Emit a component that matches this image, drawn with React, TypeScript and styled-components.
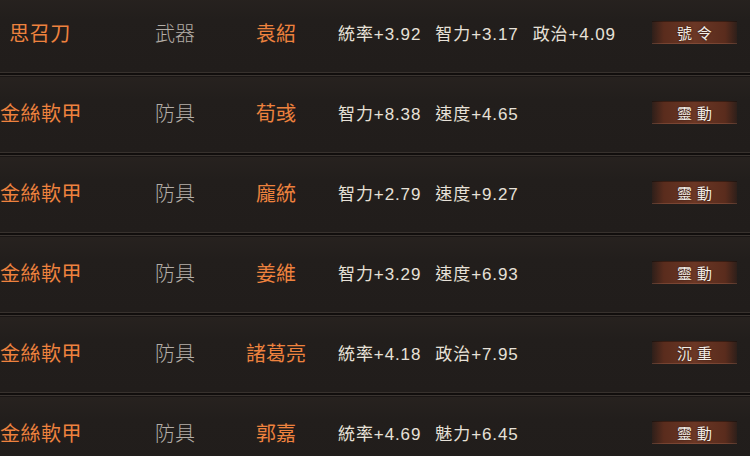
import React from "react";
import styled, { createGlobalStyle } from "styled-components";

const GlobalStyle = createGlobalStyle`
  html, body {
    margin: 0;
    padding: 0;
    width: 750px;
    height: 456px;
    overflow: hidden;
    background: #221e1c;
  }
`;

const List = styled.div`
  display: flex;
  flex-direction: column;
  margin-top: -3px;
  width: 750px;
  font-family: "Noto Sans CJK TC", "Noto Sans CJK SC", sans-serif;
`;

const Row = styled.div`
  display: flex;
  flex-direction: column;
`;

const RowBody = styled.div`
  height: 75px;
  box-sizing: border-box;
  padding: 0 13px 4px 0;
  display: flex;
  align-items: center;
  background: linear-gradient(180deg, #27221f 0%, #221e1c 30%, #211d1b 100%);
`;

const Separator = styled.div`
  height: 5px;
  box-sizing: border-box;
  border-top: 1px solid #37312d;
  border-bottom: 1px solid #1a1615;
  background: linear-gradient(180deg, #110e0d 0%, #110e0d 60%, #3a3430 60%, #3a3430 100%);
`;

const NameCell = styled.div`
  width: 80px;
  flex: none;
  text-align: center;
  font-size: 20px;
  font-weight: 400;
  letter-spacing: 0.5px;
  color: #ee823e;
  white-space: nowrap;
`;

const TypeCell = styled.div`
  width: 80px;
  flex: none;
  margin-left: 55px;
  text-align: center;
  font-size: 20px;
  font-weight: 300;
  color: #b3ada7;
  white-space: nowrap;
`;

const HeroCell = styled.div`
  width: 80px;
  flex: none;
  margin-left: 21px;
  text-align: center;
  font-size: 20px;
  font-weight: 400;
  color: #ee823e;
  white-space: nowrap;
`;

const StatsCell = styled.div`
  flex: 1;
  margin-left: 22px;
  display: flex;
  align-items: center;
  gap: 14px;
  font-family: "Liberation Sans", "Noto Sans CJK TC", sans-serif;
  font-size: 17px;
  letter-spacing: 0.9px;
  color: #e7e1d8;
  white-space: nowrap;
`;

const Stat = styled.span``;

const Tag = styled.div`
  width: 85px;
  height: 23px;
  flex: none;
  box-sizing: border-box;
  display: flex;
  align-items: center;
  justify-content: center;
  padding-left: 5px;
  font-size: 15px;
  letter-spacing: 5px;
  color: #f2ede6;
  background: linear-gradient(
    90deg,
    rgba(70, 34, 22, 0.35) 0%,
    #5a2c1d 14%,
    #6b3725 50%,
    #5a2c1d 86%,
    rgba(70, 34, 22, 0.35) 100%
  );
  box-shadow: inset 0 -1px 0 rgba(170, 110, 85, 0.35), inset 0 1px 0 rgba(0, 0, 0, 0.35);
  text-shadow: 0 0 2px rgba(0, 0, 0, 0.6);
`;

type Item = {
  name: string;
  type: string;
  hero: string;
  stats: string[];
  tag: string;
};

const items: Item[] = [
  { name: "思召刀", type: "武器", hero: "袁紹", stats: ["統率+3.92", "智力+3.17", "政治+4.09"], tag: "號令" },
  { name: "金絲軟甲", type: "防具", hero: "荀彧", stats: ["智力+8.38", "速度+4.65"], tag: "靈動" },
  { name: "金絲軟甲", type: "防具", hero: "龐統", stats: ["智力+2.79", "速度+9.27"], tag: "靈動" },
  { name: "金絲軟甲", type: "防具", hero: "姜維", stats: ["智力+3.29", "速度+6.93"], tag: "靈動" },
  { name: "金絲軟甲", type: "防具", hero: "諸葛亮", stats: ["統率+4.18", "政治+7.95"], tag: "沉重" },
  { name: "金絲軟甲", type: "防具", hero: "郭嘉", stats: ["統率+4.69", "魅力+6.45"], tag: "靈動" },
];

export default function App() {
  return (
    <>
      <GlobalStyle />
      <List>
        {items.map((it, i) => (
          <Row key={i}>
            <RowBody>
              <NameCell>{it.name}</NameCell>
              <TypeCell>{it.type}</TypeCell>
              <HeroCell>{it.hero}</HeroCell>
              <StatsCell>
                {it.stats.map((s) => (
                  <Stat key={s}>{s}</Stat>
                ))}
              </StatsCell>
              <Tag>{it.tag}</Tag>
            </RowBody>
            <Separator />
          </Row>
        ))}
      </List>
    </>
  );
}
